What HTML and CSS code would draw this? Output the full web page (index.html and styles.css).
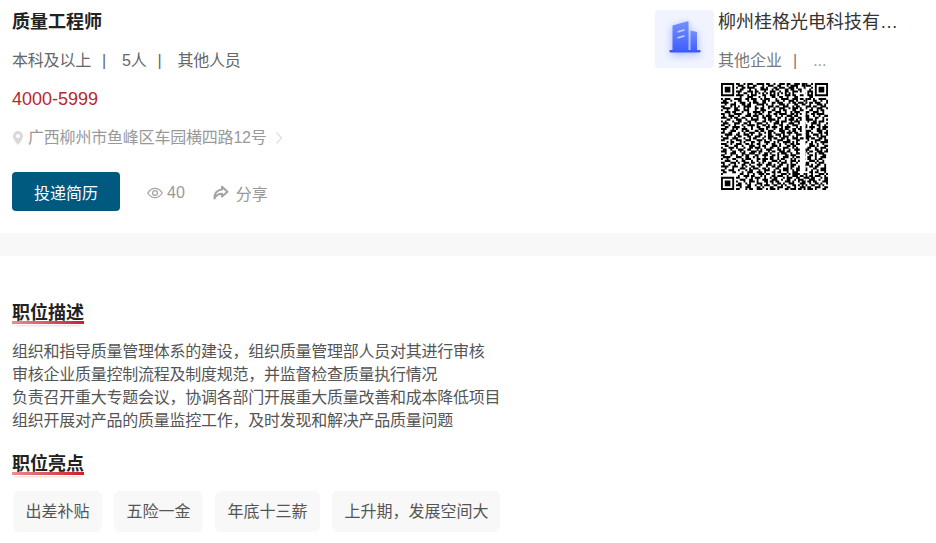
FILE: index.html
```html
<!DOCTYPE html>
<html lang="zh-CN">
<head>
  <meta charset="UTF-8">
  <title>质量工程师</title>
  <link rel="stylesheet" href="styles.css">
</head>
<body>

  <!-- job summary -->
  <div class="summary">
    <div class="job">
      <h1 class="job-title">质量工程师</h1>
      <div class="job-meta">
        <span>本科及以上</span><span class="sep">|</span><span>5人</span><span class="sep">|</span><span>其他人员</span>
      </div>
      <div class="salary">4000-5999</div>
      <div class="address">
        <svg class="pin" width="12" height="16" viewBox="0 0 12 16"><path fill="#d9d9d9" fill-rule="evenodd" d="M6 1a5 5 0 0 1 5 5c0 3.500-5 9-5 9S1 9.500 1 6a5 5 0 0 1 5-5zm0 3a2 2 0 1 0 0 4 2 2 0 0 0 0-4z"/></svg>
        <span>广西柳州市鱼峰区车园横四路12号</span>
        <svg class="chevron" width="8" height="14" viewBox="0 0 8 14"><path fill="none" stroke="#e2e2e2" stroke-width="1.500" d="M1.500 1.500 6.500 7l-5 5.500"/></svg>
      </div>
      <div class="actions">
        <button class="apply">投递简历</button>
        <span class="stat">
          <svg width="16" height="12" viewBox="0 0 17 12"><path fill="none" stroke="#a3a3a3" stroke-width="1.300" d="M.8 6C2.800 2.800 5.400 1 8.500 1s5.700 1.800 7.700 5c-2 3.200-4.600 5-7.700 5S2.800 9.200.8 6z"/><circle cx="8.500" cy="6" r="2.600" fill="none" stroke="#a3a3a3" stroke-width="1.300"/></svg>
          40
        </span>
        <span class="stat share">
          <svg width="17" height="16" viewBox="0 0 17 16"><path fill="none" stroke="#a3a3a3" stroke-width="2" stroke-linejoin="round" d="M10 1.800 15.500 6.800 10 11.500V8.800C6.500 8.800 4.200 10.200 2.500 13.500 2 8.500 4.800 5 10 4.600z"/></svg>
          分享
        </span>
      </div>
    </div>

    <div class="company">
      <div class="company-head">
        <div class="logo">
          <svg width="38" height="38" viewBox="0 0 38 38">
            <defs>
              <linearGradient id="bld" x1="0" y1="0" x2="0" y2="1">
                <stop offset="0" stop-color="#7391ff"/>
                <stop offset="1" stop-color="#3f5fff"/>
              </linearGradient>
            </defs>
            <path fill="url(#bld)" d="M6.500 5.500 22.500 1V31H6.500z"/>
            <path fill="url(#bld)" d="M24.500 10.500l6.500 1.500V31H24.500z"/>
            <path fill="#3f5bf5" d="M3.500 30h31v1.500a1 1 0 0 1-1 1h-29a1 1 0 0 1-1-1z"/>
            <path fill="#c3d0ff" d="M11.500 11l7-2v1.800l-7 2zM11.500 17l7-2v1.800l-7 2z"/>
          </svg>
        </div>
        <div class="company-info">
          <div class="company-name">柳州桂格光电科技有…</div>
          <div class="company-meta"><span>其他企业</span><span class="sep">|</span><span class="more">...</span></div>
        </div>
      </div>
      <svg class="qr" width="107" height="107" viewBox="0 0 57 57">
        <defs>
          <clipPath id="qr-right"><rect x="45" y="0" width="12" height="57"/></clipPath>
        </defs>
        <path id="qr-body" fill="none" stroke="#000" stroke-width="1.100" d="M8 .5h2m2 0h1m1 0h3m2 0h4m1 0h2m2 0h1m2 0h3m1 0h2m2 0h3m1 0h2
          M9 1.500h3m2 0h1m2 0h2m3 0h1m2 0h3m2 0h2m3 0h1m1 0h4m2 0h2
          M8 2.500h1m2 0h2m1 0h4m3 0h2m1 0h1m3 0h2m1 0h3m2 0h3m1 0h1m3 0h1
          M10 3.500h2m3 0h1m2 0h1m2 0h4m2 0h1m1 0h2m3 0h2m1 0h2m2 0h2
          M8 4.500h3m3 0h3m1 0h2m3 0h1m2 0h3m2 0h1m2 0h2m2 0h3m1 0h1
          M9 5.500h1m2 0h2m2 0h1m1 0h1m1 0h1m1 0h1m1 0h1m1 0h1m1 0h1m1 0h1m1 0h1m1 0h1m1 0h1m1 0h1
          M8 6.500h4m2 0h1m1 0h3m3 0h2m2 0h3m1 0h1m3 0h3m1 0h2m2 0h2
          M10 7.500h1m3 0h3m3 0h1m2 0h1m3 0h2m2 0h2m2 0h1m3 0h2
          M0 8.500h1m1 0h3m2 0h4m2 0h2m1 0h3m2 0h1m1 0h3m3 0h1m2 0h4m2 0h3m1 0h2m2 0h2
          M1 9.500h2m2 0h1m3 0h2m3 0h1m2 0h2m3 0h2m1 0h1m3 0h2m2 0h1m2 0h3m1 0h1m3 0h1
          M0 10.500h4m3 0h1m2 0h3m2 0h1m1 0h3m2 0h2m3 0h2m1 0h3m3 0h1m1 0h2m1 0h3m1 0h1
          M2 11.500h1m2 0h3m3 0h2m1 0h2m3 0h4m1 0h1m2 0h1m3 0h3m1 0h1m3 0h2m2 0h2
          M0 12.500h2m3 0h1m1 0h1m1 0h1m2 0h4m2 0h1m3 0h1m2 0h3m1 0h2m2 0h3m2 0h1m1 0h2
          M1 13.500h4m2 0h2m3 0h1m1 0h1m3 0h2m1 0h2m2 0h1m2 0h1m2 0h3m2 0h1m1 0h3m1 0h1
          M0 14.500h1m2 0h1m3 0h3m2 0h3m3 0h1m2 0h3m3 0h2m2 0h1m1 0h2m3 0h2m2 0h2
          M2 15.500h3m1 0h2m3 0h1m2 0h1m2 0h4m1 0h1m2 0h2m2 0h3m2 0h1m2 0h1m1 0h3
          M0 16.500h2m2 0h1m2 0h4m3 0h2m2 0h1m1 0h2m3 0h1m2 0h2m1 0h4m2 0h2m1 0h1m1 0h1
          M1 17.500h1m2 0h3m2 0h1m3 0h3m1 0h3m2 0h1m1 0h3m2 0h1m2 0h1m2 0h3m1 0h2
          M0 18.500h3m2 0h1m1 0h2m2 0h2m3 0h1m2 0h1m2 0h2m1 0h2m3 0h2m2 0h1m2 0h2m2 0h2
          M3 19.500h2m3 0h3m2 0h1m2 0h4m3 0h1m1 0h4m1 0h1m3 0h1m1 0h3m1 0h1m1 0h1
          M0 20.500h1m1 0h1m3 0h1m2 0h2m3 0h2m2 0h1m3 0h2m2 0h1m2 0h2m1 0h3m2 0h1m1 0h3
          M1 21.500h3m3 0h3m2 0h2m1 0h1m3 0h3m2 0h1m3 0h3m1 0h1m3 0h3m2 0h1
          M0 22.500h2m2 0h1m2 0h1m3 0h1m2 0h4m1 0h1m2 0h2m1 0h1m2 0h1m2 0h2m2 0h1m2 0h3
          M2 23.500h2m2 0h4m2 0h1m3 0h1m2 0h2m3 0h2m1 0h3m2 0h1m1 0h3m3 0h1m1 0h1
          M0 24.500h3m3 0h1m1 0h1m2 0h3m2 0h1m3 0h3m1 0h1m3 0h1m2 0h2m1 0h2m2 0h2m1 0h2
          M1 25.500h1m3 0h3m3 0h1m1 0h2m3 0h2m1 0h2m2 0h3m3 0h3m2 0h1m1 0h2m2 0h1
          M0 26.500h2m2 0h2m3 0h1m2 0h1m2 0h3m2 0h1m2 0h1m1 0h2m1 0h1m3 0h2m1 0h3m1 0h2
          M2 27.500h4m2 0h2m2 0h3m1 0h1m3 0h2m3 0h2m2 0h3m1 0h1m2 0h1m3 0h3
          M0 28.500h1m2 0h1m3 0h1m1 0h2m3 0h2m2 0h3m2 0h1m1 0h3m3 0h1m1 0h3m2 0h1m1 0h1
          M1 29.500h3m2 0h3m3 0h1m2 0h1m1 0h2m3 0h1m2 0h2m1 0h2m2 0h2m1 0h1m2 0h3m1 0h2
          M0 30.500h2m3 0h1m2 0h3m2 0h3m3 0h3m1 0h1m2 0h1m3 0h3m2 0h2m3 0h2
          M3 31.500h1m1 0h2m3 0h1m1 0h1m3 0h2m2 0h1m2 0h3m2 0h1m1 0h1m2 0h4m1 0h1m1 0h1
          M0 32.500h3m2 0h1m2 0h3m2 0h2m1 0h1m2 0h2m3 0h1m2 0h2m2 0h1m2 0h1m2 0h2m1 0h2
          M2 33.500h2m3 0h2m2 0h1m3 0h3m2 0h1m1 0h2m3 0h3m1 0h1m3 0h2m1 0h2
          M0 34.500h1m3 0h3m1 0h1m3 0h1m2 0h2m1 0h3m2 0h1m2 0h2m2 0h1m2 0h3m2 0h1m1 0h1
          M1 35.500h2m2 0h1m3 0h3m2 0h2m3 0h1m1 0h1m2 0h3m3 0h2m1 0h1m2 0h1m2 0h3
          M0 36.500h3m3 0h2m2 0h1m1 0h1m3 0h3m1 0h2m3 0h1m1 0h2m2 0h3m1 0h2m3 0h1
          M2 37.500h1m2 0h3m3 0h2m2 0h3m2 0h1m2 0h2m1 0h1m3 0h1m1 0h3m2 0h1m2 0h2
          M0 38.500h2m3 0h1m2 0h1m2 0h1m1 0h2m3 0h2m2 0h3m2 0h2m1 0h1m3 0h2m1 0h3
          M1 39.500h4m3 0h3m2 0h2m2 0h1m1 0h1m3 0h1m2 0h2m2 0h1m2 0h3m2 0h1m1 0h2
          M0 40.500h1m2 0h1m2 0h2m3 0h1m1 0h3m3 0h2m1 0h3m1 0h2m2 0h1m1 0h2m3 0h1m1 0h1
          M2 41.500h3m3 0h1m2 0h2m3 0h1m2 0h1m2 0h2m3 0h3m1 0h1m2 0h1m2 0h3m1 0h1
          M0 42.500h2m3 0h3m1 0h1m2 0h3m1 0h2m2 0h1m1 0h1m2 0h2m3 0h1m1 0h3m2 0h1m2 0h1
          M1 43.500h1m2 0h1m2 0h1m3 0h2m2 0h1m3 0h3m2 0h3m1 0h1m2 0h2m2 0h1m1 0h3
          M0 44.500h4m2 0h3m2 0h1m1 0h1m2 0h2m2 0h1m3 0h1m2 0h2m1 0h2m3 0h1m1 0h2m2 0h1
          M2 45.500h1m3 0h1m3 0h3m2 0h1m1 0h3m2 0h2m1 0h1m3 0h2m2 0h3m1 0h1m2 0h2
          M0 46.500h2m2 0h3m2 0h1m3 0h1m1 0h2m3 0h1m2 0h3m2 0h1m2 0h1m1 0h3m2 0h1m1 0h2
          M1 47.500h2m3 0h2m3 0h1m2 0h3m2 0h3m1 0h1m3 0h2m1 0h2m3 0h1m2 0h3
          M0 48.500h1m9 0h2m2 0h1m2 0h1m2 0h3m1 0h2m2 0h1m3 0h3m1 0h1m1 0h4m2 0h1
          M9 49.500h1m2 0h3m1 0h2m3 0h1m1 0h1m3 0h2m1 0h3m2 0h1m2 0h3m1 0h2m1 0h1
          M8 50.500h2m3 0h1m2 0h1m1 0h3m2 0h1m2 0h1m1 0h2m3 0h1m1 0h3m2 0h2m2 0h3
          M10 51.500h3m2 0h2m2 0h1m2 0h3m2 0h3m2 0h1m2 0h2m2 0h1m1 0h3m3 0h1
          M8 52.500h1m3 0h1m2 0h3m1 0h1m3 0h2m1 0h2m1 0h2m3 0h3m1 0h1m2 0h1m1 0h2
          M9 53.500h2m2 0h1m1 0h1m3 0h3m2 0h1m2 0h1m2 0h2m1 0h1m2 0h3m3 0h3
          M8 54.500h3m3 0h2m2 0h1m2 0h1m1 0h3m2 0h2m2 0h1m1 0h1m3 0h2m1 0h1m1 0h1
          M10 55.500h1m2 0h3m3 0h2m1 0h1m3 0h2m2 0h3m2 0h2m2 0h1m2 0h3
          M8 56.500h2m3 0h1m1 0h2m2 0h3m2 0h1m1 0h3m1 0h1m3 0h2m1 0h3m1 0h2m1 0h1"/>
        <g clip-path="url(#qr-right)"><use href="#qr-body" x="20"/></g>
        <path fill="#fff" d="M0 0h8v8H0zM49 0h8v8h-8zM0 49h8v8H0z"/>
        <path fill="#000" fill-rule="evenodd" d="M0 0h7v7H0zM1 1v5h5V1zM2 2h3v3H2zM50 0h7v7h-7zM51 1v5h5V1zM52 2h3v3h-3zM0 50h7v7H0zM1 51v5h5v-5zM2 52h3v3H2z"/>
      </svg>
    </div>
  </div>

  <div class="band"></div>

  <!-- job details -->
  <div class="detail">
    <h2 class="section-title"><span>职位描述</span></h2>
    <div class="desc">
      <p>组织和指导质量管理体系的建设，组织质量管理部人员对其进行审核</p>
      <p>审核企业质量控制流程及制度规范，并监督检查质量执行情况</p>
      <p>负责召开重大专题会议，协调各部门开展重大质量改善和成本降低项目</p>
      <p>组织开展对产品的质量监控工作，及时发现和解决产品质量问题</p>
    </div>
    <h2 class="section-title"><span>职位亮点</span></h2>
    <div class="tags">
      <span class="tag">出差补贴</span>
      <span class="tag">五险一金</span>
      <span class="tag">年底十三薪</span>
      <span class="tag">上升期，发展空间大</span>
    </div>
  </div>

</body>
</html>
```

FILE: styles.css
```css
body {
  margin: 0;
  background: #fff;
  font-family: "Liberation Sans", "Noto Sans CJK SC", sans-serif;
  font-size: 16px;
  color: #666;
  overflow: hidden;
}
.summary {
  display: flex;
  justify-content: space-between;
  height: 233px;
}
.job {
  padding: 3px 0 0 12px;
}
.job-title {
  margin: 0;
  font-size: 18px;
  line-height: 38px;
  color: #222;
}
.job-meta {
  line-height: 39px;
  letter-spacing: -.2px;
  color: #666;
}
.sep {
  margin: 0 16px 0 11px;
}
.salary {
  font-size: 18px;
  line-height: 38px;
  color: #b8282f;
}
.address {
  display: flex;
  align-items: center;
  gap: 4px;
  line-height: 39px;
  letter-spacing: -.2px;
  color: #999;
}
.chevron {
  margin-left: 4px;
}
.actions {
  display: flex;
  align-items: center;
  margin-top: 15px;
}
.apply {
  width: 108px;
  height: 39px;
  padding: 0;
  font: inherit;
  color: #fff;
  background: #00597f;
  border: none;
  border-radius: 4px;
}
.stat {
  display: flex;
  align-items: center;
  gap: 4px;
  margin: 2px 0 0 27px;
  color: #999;
}
.share {
  gap: 7px;
}
.company {
  width: 281px;
  padding-top: 10px;
}
.company-head {
  display: flex;
  gap: 4px;
  height: 73px;
}
.logo {
  display: flex;
  align-items: center;
  justify-content: center;
  width: 59px;
  height: 58px;
  background: #f1f4ff;
  border-radius: 4px;
}
.logo svg {
  filter: drop-shadow(0 2px 4px rgba(63, 95, 255, .45));
}
.company-info {
  width: 180px;
}
.company-name {
  font-size: 18px;
  line-height: 24px;
  color: #333;
  white-space: nowrap;
}
.company-meta {
  margin-top: 15px;
  line-height: 24px;
  color: #777;
}
.more {
  color: #999;
}
.qr {
  display: block;
  margin-left: 66px;
}
.band {
  height: 23px;
  background: #f8f8f8;
}
.detail {
  padding: 45px 12px 0;
}
.section-title {
  margin: 0;
  font-size: 18px;
  line-height: 24px;
  color: #222;
}
.section-title span {
  display: inline-block;
  background: linear-gradient(90deg, #e98e93, #c9202b) no-repeat 0 calc(100% - 1px) / 100% 3px;
  box-shadow: 0 3px 3px -3px rgba(201, 32, 43, .35);
}
.desc {
  margin: 15px 0 20px;
  line-height: 23px;
  letter-spacing: -.25px;
  color: #555;
}
.desc p {
  margin: 0;
}
.tags {
  display: flex;
  gap: 12px;
  margin: 15px 0 0 1px;
}
.tag {
  padding: 0 12.5px;
  line-height: 41px;
  color: #555;
  background: #f8f8f8;
  border-radius: 6px;
}
.tag:last-child {
  padding-right: 11px;
}
```
